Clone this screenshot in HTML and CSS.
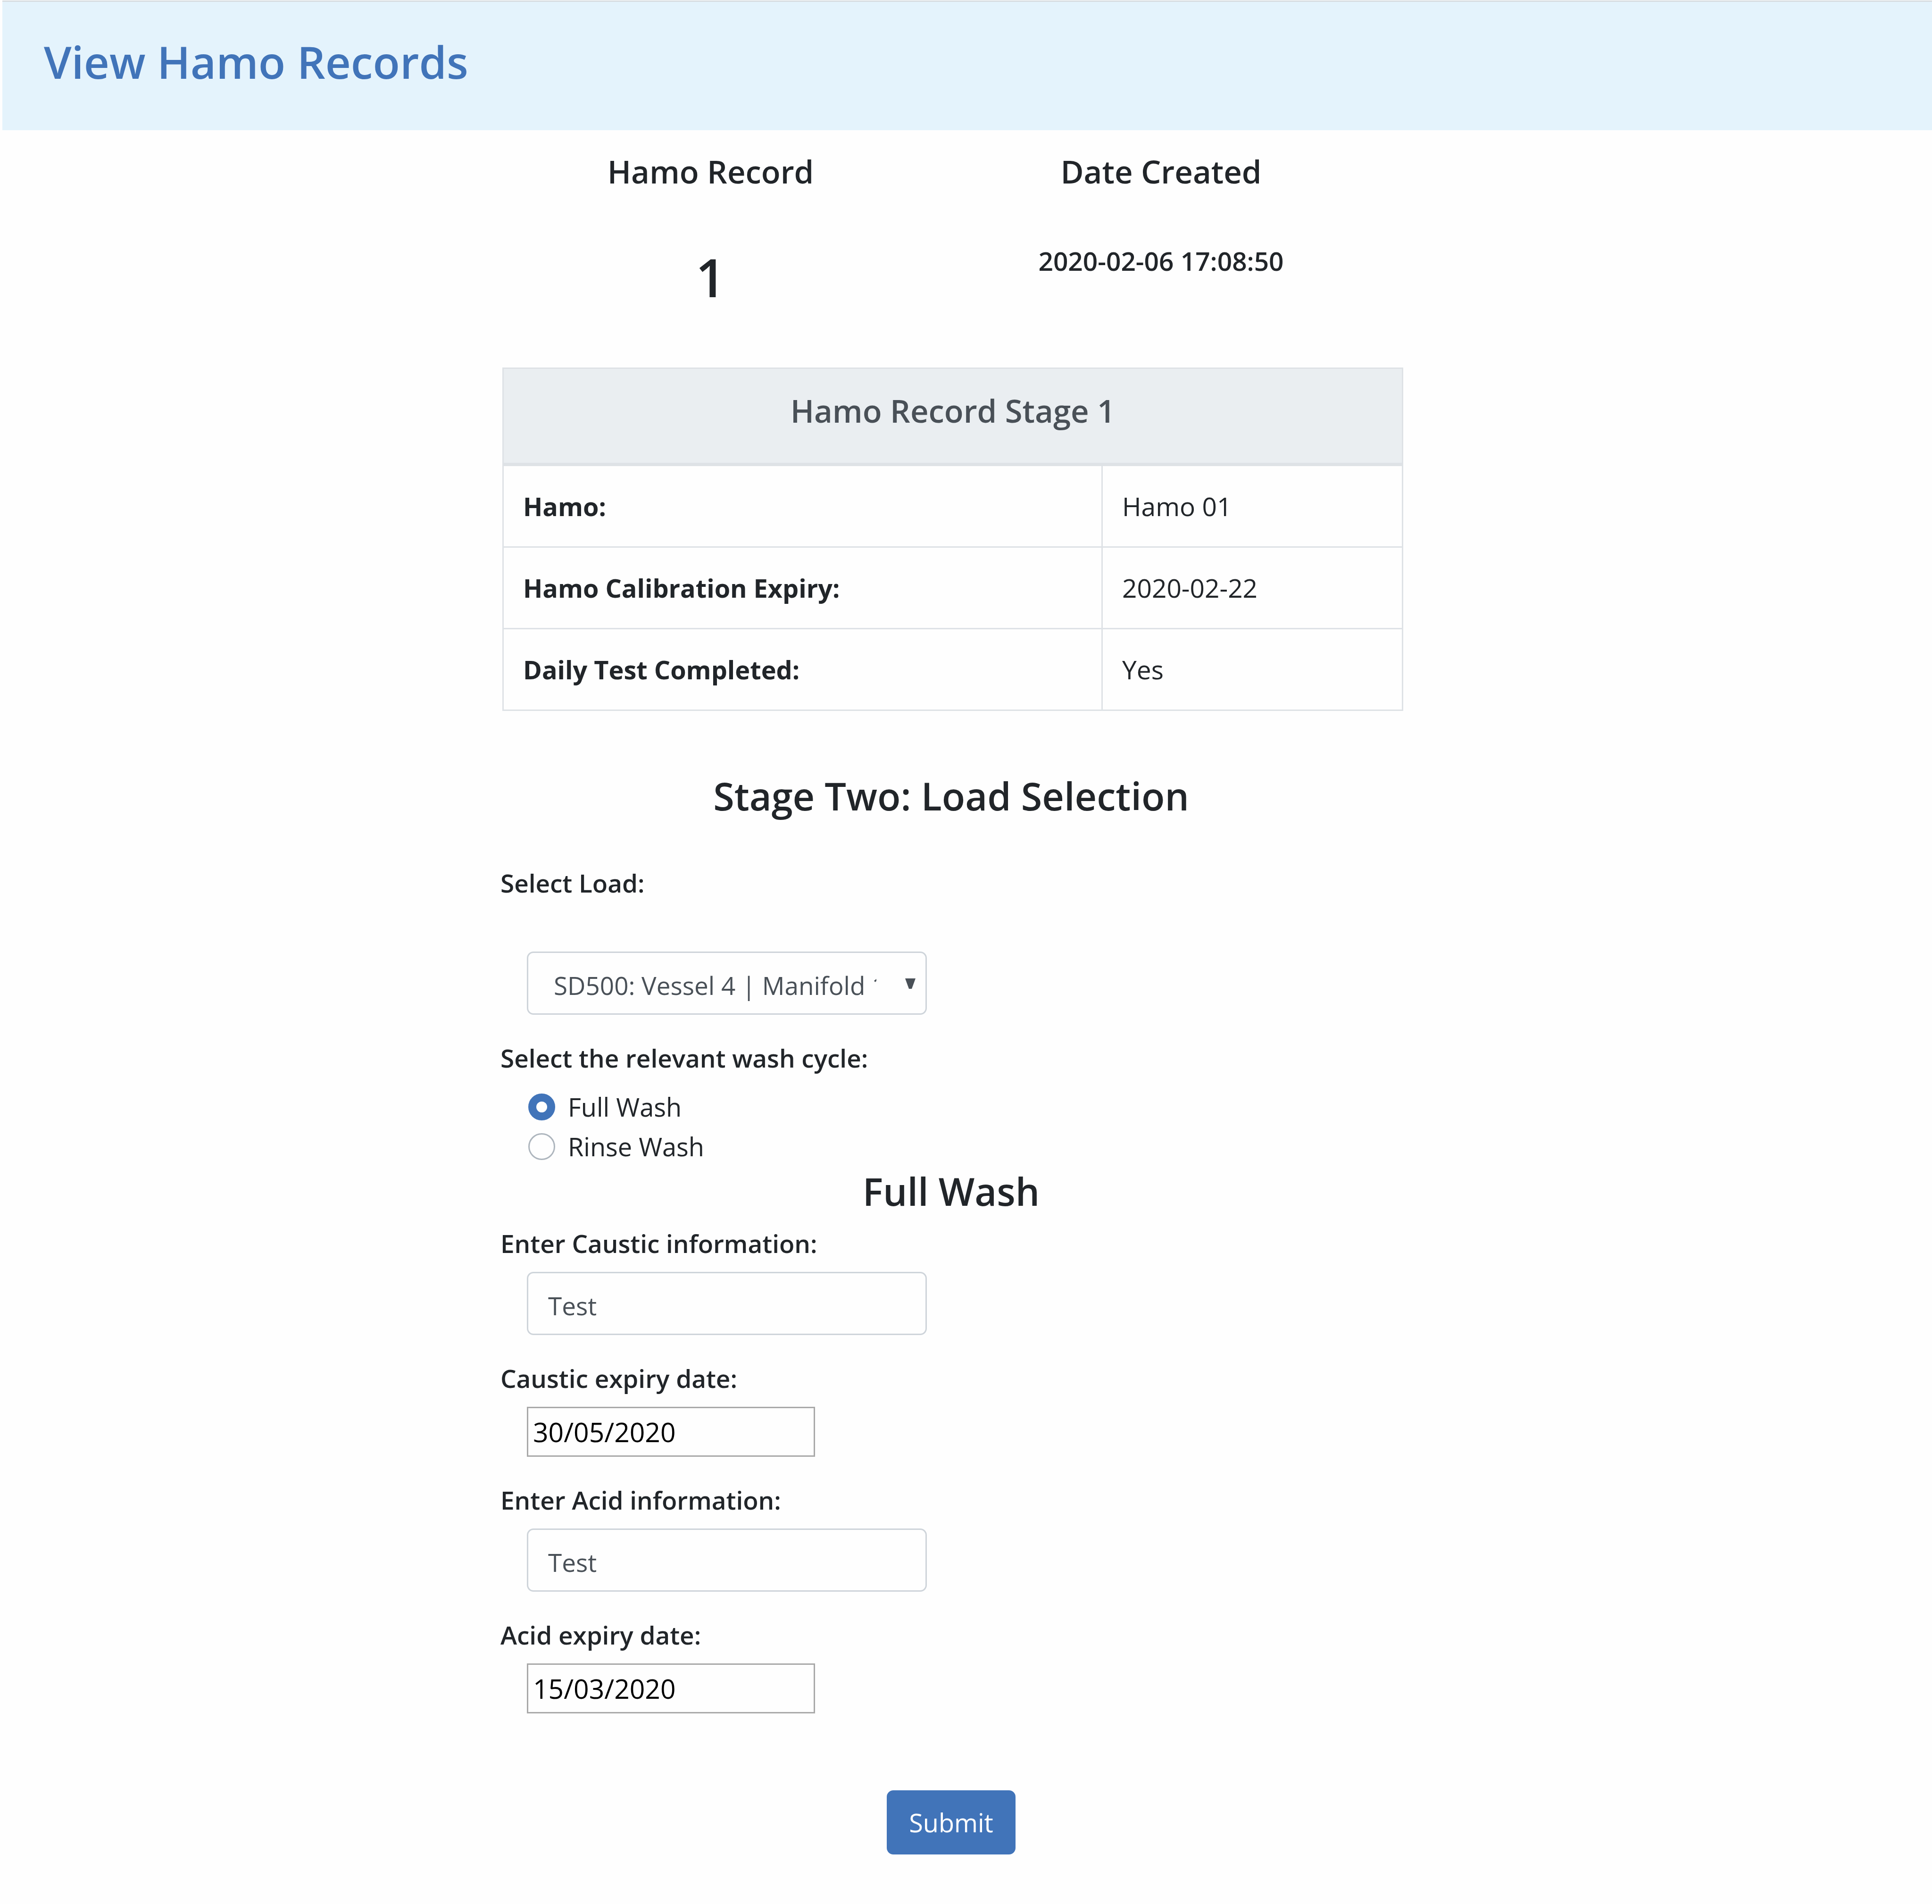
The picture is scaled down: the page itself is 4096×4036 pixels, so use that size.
FILE: index.html
```html
<!DOCTYPE html>
<html lang="en">
<head>
<meta charset="utf-8">
<meta name="viewport" content="width=device-width, initial-scale=1">
<title>View Hamo Records</title>
<link rel="stylesheet" href="styles.css">
</head>
<body>
<header class="page-header">
  <h1 class="page-title">View Hamo Records</h1>
</header>
<main class="page-main">
  <div class="content">
    <section class="summary">
      <div class="summary-item">
        <h4 class="summary-label">Hamo Record</h4>
        <p class="summary-number">1</p>
      </div>
      <div class="summary-item">
        <h4 class="summary-label">Date Created</h4>
        <p class="summary-date">2020-02-06 17:08:50</p>
      </div>
    </section>

    <table class="record-table">
      <colgroup><col class="col-name"><col></colgroup>
      <thead>
        <tr><th colspan="2" scope="colgroup">Hamo Record Stage 1</th></tr>
      </thead>
      <tbody>
        <tr><th scope="row">Hamo:</th><td>Hamo 01</td></tr>
        <tr><th scope="row">Hamo Calibration Expiry:</th><td>2020-02-22</td></tr>
        <tr><th scope="row">Daily Test Completed:</th><td>Yes</td></tr>
      </tbody>
    </table>

    <form class="load-form">
      <h3 class="section-title stage-title">Stage Two: Load Selection</h3>

      <div class="field load-field">
        <label for="load">Select Load:</label>
        <div class="select-wrap">
          <select id="load" class="control">
            <option>SD500: Vessel 4 | Manifold 1</option>
          </select>
          <svg class="select-arrow" viewBox="0 0 22 22" aria-hidden="true"><path d="M0 0H22L14 22H8Z"/></svg>
        </div>
      </div>

      <fieldset class="cycle">
        <legend>Select the relevant wash cycle:</legend>
        <label class="radio-row"><input type="radio" name="cycle" checked>Full Wash</label>
        <label class="radio-row"><input type="radio" name="cycle">Rinse Wash</label>
      </fieldset>

      <h3 class="section-title wash-title">Full Wash</h3>

      <div class="field">
        <label for="caustic-info">Enter Caustic information:</label>
        <input id="caustic-info" class="control" type="text" value="Test">
      </div>
      <div class="field">
        <label for="caustic-date">Caustic expiry date:</label>
        <input id="caustic-date" class="date-control" type="text" value="30/05/2020">
      </div>
      <div class="field">
        <label for="acid-info">Enter Acid information:</label>
        <input id="acid-info" class="control" type="text" value="Test">
      </div>
      <div class="field">
        <label for="acid-date">Acid expiry date:</label>
        <input id="acid-date" class="date-control" type="text" value="15/03/2020">
      </div>

      <button class="submit" type="submit">Submit</button>
    </form>
  </div>
</main>
</body>
</html>
```
FILE: styles.css
```css
*,
*::before,
*::after {
  box-sizing: border-box;
}

body {
  margin: 0;
  padding: 1px 0 0 5px;
  background: #fefefe;
  color: #212529;
  font-family: "Open Sans", "Noto Sans", sans-serif;
  font-size: 54px;
  line-height: 84px;
}

h1, h3, h4, p {
  margin: 0;
  font-weight: 600;
}

/* Header band */
.page-header {
  padding: 68px 88px 86px;
  border-top: 3px solid #d8dde1;
  background: #e4f3fc;
}

.page-title {
  color: #4174b9;
  font-size: 94px;
  line-height: 118px;
}

/* Centre column */
.page-main {
  display: grid;
  grid-template-columns: 1053fr 1917fr 1121fr;
  padding: 45px 0 106px;
}

.content {
  grid-column: 2;
}

/* Record summary */
.summary {
  display: grid;
  grid-template-columns: 897fr 1013fr;
  margin-bottom: 125px;
  padding-right: 7px;
  text-align: center;
}

.summary-label {
  margin-bottom: 115px;
  font-size: 67px;
}

.summary-number {
  font-size: 112px;
  line-height: 134px;
}

.summary-date {
  font-size: 55px;
  line-height: 66px;
}

/* Record table */
.record-table {
  width: calc(100% - 7px);
  margin-left: 7px;
  border: solid #dee2e6;
  border-width: 3px 0 0 3px;
  border-spacing: 0;
  table-layout: fixed;
}

.col-name {
  width: 66.6%;
}

.record-table th,
.record-table td {
  padding: 43px 41px;
  border: solid #dee2e6;
  border-width: 0 3px 3px 0;
  text-align: left;
}

.record-table td {
  font-size: 55px;
}

.record-table thead th {
  padding: 46px 41px 69px;
  border-bottom-width: 7px;
  background: #eaeef1;
  color: #495057;
  font-size: 67px;
  font-weight: 600;
  text-align: center;
}

/* Form */
.load-form {
  display: flex;
  flex-direction: column;
}

.section-title {
  font-size: 81px;
  line-height: 100px;
  text-align: center;
}

.stage-title {
  margin: 130px 0 93px;
}

.wash-title {
  margin: 3px 0 19px;
}

.field {
  display: flex;
  flex-direction: column;
  align-items: flex-start;
  gap: 18px;
  margin-bottom: 50px;
}

.load-field {
  gap: 103px;
}

.field > label,
legend {
  padding: 0 0 0 3px;
  font-size: 53px;
  font-weight: 600;
}

.control {
  display: block;
  width: 848px;
  max-width: 100%;
  height: 134px;
  margin: 0 0 0 59px;
  padding: 8px 42px 0;
  border: 3px solid #ced4da;
  border-radius: 14px;
  background: #fefefe;
  color: #495057;
  font-family: inherit;
  font-size: 53px;
}

.select-wrap {
  position: relative;
}

select.control {
  padding: 8px 104px 0 54px;
  appearance: none;
}

.select-arrow {
  position: absolute;
  top: 57px;
  right: 24px;
  width: 22px;
  height: 22px;
  fill: #495057;
}

.date-control {
  width: 611px;
  height: 106px;
  margin: 0 0 0 59px;
  padding: 0 10px;
  border: 3px solid #a9a9a9;
  background: #fefefe;
  color: #000;
  font-family: inherit;
  font-size: 57px;
}

.cycle {
  margin: 0;
  padding: 0;
  border: 0;
}

legend {
  margin-bottom: 19px;
}

.radio-row {
  display: flex;
  align-items: center;
  gap: 27px;
  margin-left: 62px;
}

.radio-row input {
  width: 57px;
  height: 57px;
  margin: 0;
  border: 3px solid #adb5bd;
  border-radius: 50%;
  background: #fefefe;
  appearance: none;
}

.radio-row input:checked {
  border: 17px solid #4174b9;
}

.submit {
  align-self: center;
  margin-top: 113px;
  padding: 23px 44px;
  border: 3px solid #4174b9;
  border-radius: 14px;
  background: #4174b9;
  color: #fff;
  font-family: inherit;
  font-size: 54px;
  line-height: 84px;
}
```
